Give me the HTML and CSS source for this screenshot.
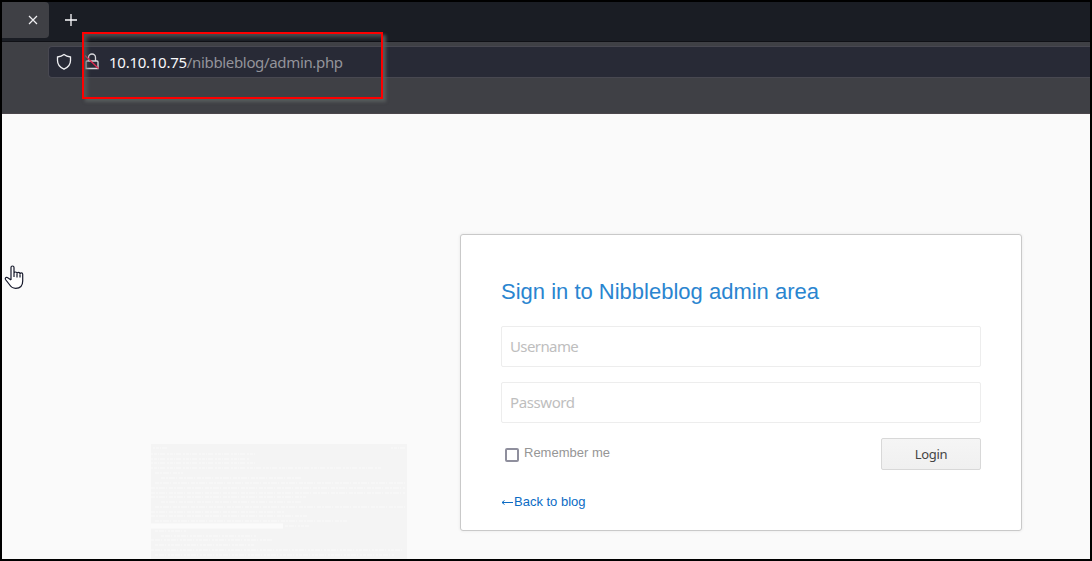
FILE: index.html
```html
<!DOCTYPE html>
<html lang="en">
<head>
<meta charset="utf-8">
<title>Nibbleblog admin</title>
<link rel="stylesheet" href="styles.css">
</head>
<body>
<div class="window">
  <div class="tabs">
    <div class="tab"><svg class="close" viewBox="0 0 10 10"><path d="M1 1l8 8M9 1L1 9"/></svg></div>
    <svg class="plus" viewBox="0 0 12 12"><path d="M6 0v12M0 6h12"/></svg>
  </div>
  <div class="toolbar">
    <div class="urlbar">
      <svg class="shield" viewBox="0 0 16 18"><path d="M8 1.500C6 3 3.500 3.700 1.500 4v3.500c0 4 2.500 7 6.500 8.700 4-1.700 6.500-4.700 6.500-8.700V4C12.500 3.700 10 3 8 1.500z"/></svg>
      <svg class="lock" viewBox="0 0 16 18"><path d="M4.500 8V4.500a3.500 3.500 0 0 1 7 0V8M3 8h10a1 1 0 0 1 1 1v6.500H2V9a1 1 0 0 1 1-1z"/><path class="slash" d="M1 2.500l13.500 13"/></svg>
      <span class="url"><b>10.10.10.75</b>/nibbleblog/admin.php</span>
    </div>
  </div>
  <main class="page">
    <form class="card">
      <h1>Sign in to Nibbleblog admin area</h1>
      <input class="field user" type="text" placeholder="Username">
      <input class="field" type="password" placeholder="Password">
      <div class="actions">
        <label class="remember"><span class="box"></span><span class="remember-text">Remember me</span></label>
        <button class="login" type="button">Login</button>
      </div>
      <a class="back"><svg class="arrow" viewBox="0 0 12 8"><path d="M12 4.500H1M3.500 2.500L1 4.500l2.500 2"/></svg>Back to blog</a>
    </form>
  </main>
</div>
<svg class="ghost" viewBox="0 0 256 115">
  <g class="ghost-lines">
    <path stroke-dasharray="2 1 3 1 1 1 5 2" d="M2 4h16M240 4h14M0 10h104M0 15h98M0 19h105M0 24h230"/>
    <path stroke-dasharray="4 1 2 1 6 1 1 2" d="M4 29h28M10 34h140M4 39h250M0 44h254M0 49h254M0 53h155M10 58h140M4 63h250M0 68h134M0 72h156M4 77h192"/>
    <path stroke-dasharray="3 1 5 1 1 2 2 1" d="M134 82h24M4 87h31M10 92h96M0 96h122M4 101h100M0 106h252M4 111h240"/>
  </g>
  <path class="ghost-bar" d="M0 82h132"/>
</svg>
<div class="highlight"></div>
<svg class="hand" viewBox="0 0 20 26"><path d="M7 16V3.500a1.500 1.500 0 0 1 3 0V9.500a1.400 1.400 0 0 1 3 0v.3a1.400 1.400 0 0 1 3 0v.5a1.300 1.300 0 0 1 2.700 0V17c0 4.500-2.700 7.300-7 7.300-3 0-4.800-1.300-6.300-3.800L1.500 15.500c-.8-1.700 1-2.800 2.300-1.700L7 16M10 9v4M13 10v3.500M16 10.500v3"/></svg>
</body>
</html>
```
FILE: styles.css
```css
* { box-sizing: border-box; }
body { margin: 0; font-family: "Liberation Sans", Arial, sans-serif; }
svg { fill: none; flex: none; }
.window { width: 1092px; height: 561px; border: 2px solid #000; background: #fafafa; overflow: hidden; }
.tabs { display: flex; height: 40px; background: #1a1d24; border-bottom: 1px solid #101116; }
.tab { display: flex; align-items: center; width: 47px; height: 36px; padding-left: 26px; background: #3f4045; border-radius: 0 4px 4px 0; }
.close { width: 10px; height: 10px; stroke: #f0f0f3; stroke-width: 1.2; }
.plus { width: 12px; height: 12px; margin: 12px 0 0 15.500px; stroke: #fbfbfe; stroke-width: 1.3; }
.toolbar { height: 72px; padding: 4px 0 0 46px; background: #3f4045; border-bottom: 1px solid #4b464b; }
.urlbar { display: flex; align-items: center; height: 32px; padding-left: 7px; background: #282a36; border: 1px solid #484851; border-right: 0; border-radius: 4px 0 0 4px; }
.shield { width: 16px; height: 18px; stroke: #f0f0f3; stroke-width: 1.3; }
.lock { width: 16px; height: 18px; margin-left: 12px; stroke: #d8d8dc; stroke-width: 1.3; }
.lock .slash { stroke: #e22850; }
.url { margin-left: 9px; font: 15px/20px "Noto Sans", sans-serif; letter-spacing: -.34px; color: #94949b; white-space: nowrap; }
.url b { color: #f8f8fb; font-weight: 400; letter-spacing: -.26px; }
.page { padding: 120px 0 0 458px; }
.card { width: 562px; height: 297px; padding: 44px 40px 0; background: #fff; border: 1px solid #c9c9c9; border-radius: 3px; box-shadow: 0 0 3px #e5e5e5; }
h1 { margin: 0 0 21px; font-size: 22px; line-height: 26px; font-weight: 400; color: #2a85d0; white-space: nowrap; }
.field { display: block; width: 480px; height: 41px; margin: 0 0 15px; padding: 0 8px 2px; border: 1px solid #ededed; border-radius: 2px; background: #fff; font: 15px "Noto Sans", sans-serif; letter-spacing: -.4px; outline: 0; }
.user { letter-spacing: -.6px; }
.field::placeholder { color: #bebebe; opacity: 1; }
.actions { display: flex; justify-content: space-between; height: 32px; }
.remember { display: flex; font-size: 13px; line-height: 16px; color: #969696; padding: 6px 0 0 4px; }
.remember-text { padding-top: 1px; }
.box { width: 14px; height: 14px; margin: 4px 5px 0 0; border: 2px solid #8f8f9d; border-radius: 2px; }
.login { width: 100px; height: 32px; padding: 0; border: 1px solid #d8d8d8; border-radius: 2px; background: linear-gradient(#f5f5f5, #f0f0f0); color: #444; font: 13px "Noto Sans", sans-serif; letter-spacing: -.3px; }
.back { display: flex; align-items: center; margin-top: 23px; font-size: 13px; line-height: 17px; color: #0b6bc4; }
.arrow { width: 12px; height: 8px; margin-right: 1px; stroke: currentColor; }
.ghost { position: absolute; left: 151px; top: 444px; width: 256px; height: 115px; background: #f4f4f4; }
.ghost-lines { stroke: #f7f7f7; stroke-width: 1.6; }
.ghost-bar { stroke: #fbfbfb; stroke-width: 5; }
.highlight { position: absolute; left: 82px; top: 32px; width: 301px; height: 67px; border: 2px solid #fe0000; box-shadow: 3px 3px 3px rgba(90, 94, 94, .9), inset 3px 3px 4px rgba(90, 94, 94, .8); }
.hand { position: absolute; left: 4px; top: 264px; width: 20px; height: 26px; fill: #fff; stroke: #171a2c; stroke-width: 1.2; }
```
